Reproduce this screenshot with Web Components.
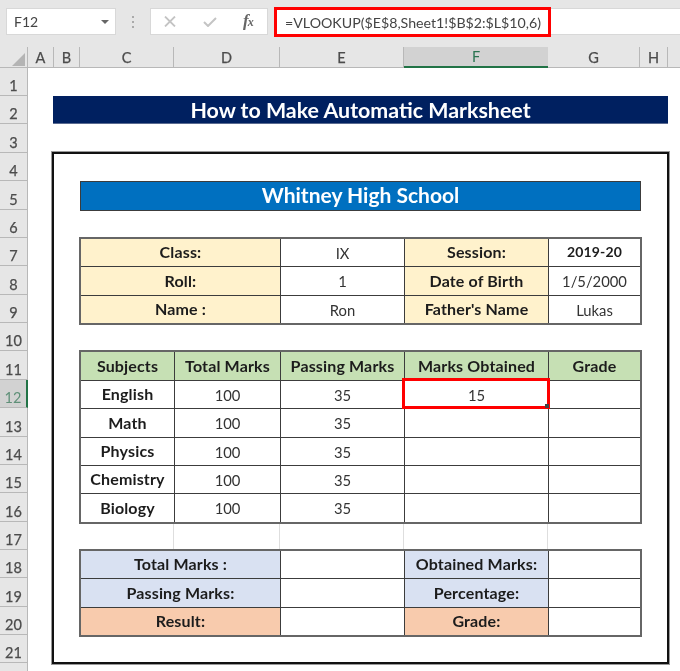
<!DOCTYPE html>
<html><head><meta charset="utf-8"><style>
html,body{margin:0;padding:0;background:#fff;overflow:hidden}
body{font-family:Lato,"Liberation Sans",sans-serif;width:680px;height:671px}
</style></head><body>
<x-excel>
<x-formula-bar name="F12" formula="=VLOOKUP($E$8,Sheet1!$B$2:$L$10,6)"></x-formula-bar>
<x-sheet id="s"></x-sheet>
</x-excel>
<script>
class XExcel extends HTMLElement{constructor(){super();this.attachShadow({mode:'open'}).innerHTML=`<style>:host{display:flex;flex-direction:column;width:680px;height:671px;overflow:hidden;color:#222;filter:blur(.3px)}::slotted(*){flex:none}</style><slot></slot>`}}
class XFormulaBar extends HTMLElement{connectedCallback(){const n=this.getAttribute('name'),f=this.getAttribute('formula');this.attachShadow({mode:'open'}).innerHTML=`<style>
:host{display:flex;height:47px;box-sizing:border-box;background:#e6e6e6;padding:8px 0 12px 6px;align-items:stretch;border-top:0}
.box{background:#fff;border:1px solid #d8d8d8;box-sizing:border-box;display:flex;align-items:center}
.name{width:110px;padding:0 6px 0 7px;justify-content:space-between;font-size:14px;color:#444}
.name i{width:0;height:0;border:4px solid transparent;border-top:4px solid #666;border-bottom:0}
.dots{width:34px;display:flex;flex-direction:column;align-items:center;justify-content:center;gap:3px}
.dots b{width:2px;height:2px;background:#aaa}
.fx{width:118px;padding:0 0 0 13px;gap:26px}
.fx svg:first-child{margin-right:1px}
.fb{flex:1;margin:-1px 0 -2px 6px;display:flex}
.f{background:#fff;width:277px;border:3px solid #f00;font-size:14.2px;color:#444;display:flex;align-items:center;padding-left:8px;box-sizing:border-box;white-space:nowrap}
.rest{flex:1;background:#fff;border-top:1px solid #d8d8d8;border-bottom:1px solid #d8d8d8;margin:1px 0 2px}
.ft{font:italic bold 17px "Liberation Serif",serif;color:#666;margin-top:-2px}
.ft small{font-size:12px;margin-left:-1px}
</style>
<div class="box name"><span>${n}</span><i></i></div>
<div class="dots"><b></b><b></b><b></b></div>
<div class="box fx">
<svg width="12" height="11" viewBox="0 0 12 11"><path d="M1 .5L11 10.5M11 .5L1 10.5" stroke="#c4c4c4" stroke-width="1.8" fill="none"/></svg>
<svg width="14" height="10" viewBox="0 0 14 10"><path d="M1 5L5 9L13 1" stroke="#c4c4c4" stroke-width="2" fill="none"/></svg>
<span class="ft">f<small>x</small></span></div>
<div class="fb"><div class="f">${f}</div><div class="rest"></div></div>`}}
class XSheet extends HTMLElement{constructor(){super();this.attachShadow({mode:'open'}).innerHTML=`<style>:host{display:grid;
grid-template-columns:28px 26px 26px 94px 106px 124px 144px 92px 28px 12px;
grid-template-rows:21px 28px 28px 29px 28px 29px 28px 28px 29px 28px 28px 29px 28px 29px 28px 28px 29px 28px 28px 29px 28px 28px 10px;background:#fff}</style><slot></slot>`}}
class XCell extends HTMLElement{connectedCallback(){const a=k=>this.getAttribute(k);
const [c,r,cs=1,rs=1]=a('at').split(',').map(Number);this.style.gridArea=`${r}/${c}/span ${rs}/span ${cs}`;
const v=a('v');const line='border:1px solid #3c3c3c;margin:0 -1px -1px 0;';const map={
h:'background:#e6e6e6;color:#4c4c4c;font-size:14.5px;border-right:1px solid #b8b8b8;border-bottom:1px solid #b8b8b8;-webkit-text-stroke:.25px #4c4c4c;',
hs:'background:#d2d2d2;color:#2a7350;font-size:14.5px;border-bottom:2px solid #217346;',
hr:'background:#d2d2d2;color:#5f9078;font-size:14.5px;border-right:2px solid #217346;border-bottom:1px solid #b8b8b8;',
t:line+'font-size:14.8px;color:#333;',
b:line+'font-size:16px;letter-spacing:.15px;font-weight:700;color:#1c1c1c;padding-bottom:2px;',
ti:line+'font-weight:700;color:#fff;'};
this.attachShadow({mode:'open'}).innerHTML=`<style>:host{display:flex;align-items:center;justify-content:center;box-sizing:border-box;white-space:nowrap;overflow:hidden;${map[a('k')]||''}${a('x')||''}}</style>${v||''}`}}
customElements.define('x-excel',XExcel);customElements.define('x-formula-bar',XFormulaBar);customElements.define('x-sheet',XSheet);customElements.define('x-cell',XCell);
const s=document.getElementById('s');
const add=(at,k,v,x)=>{const e=document.createElement('x-cell');e.setAttribute('at',at);e.setAttribute('k',k);if(v!==undefined&&v!=='')e.setAttribute('v',v);if(x)e.setAttribute('x',x);s.appendChild(e)};
// corner + headers
add('1,1','h','<svg width="13" height="13" viewBox="0 0 13 13" style="margin:4px 0 0 9px"><path d="M13 0V13H0Z" fill="#b4b4b4"/></svg>');
'ABCDEFGHI'.split('').forEach((l,i)=>add(`${i+2},1`,l=='F'?'hs':'h',l=='I'?'':l,l=='I'?'border-right:none':''));
for(let r=1;r<=22;r++)add(`1,${r+1}`,r==12?'hr':'h',r==22?'':r,'padding-top:8px');
// faint gridlines in row 17
[4,5,6,7].forEach(c=>add(`${c},18`,'', '', 'border-right:1px solid #dedede'));
// title
add('3,3,7','ti','How to Make Automatic Marksheet','background:#002060;font-size:21.4px;border:none;border-bottom:1px solid #5a6a90;margin:0 0 0 -1px');
// big box
add('3,5,7,18','','','border:2px solid #111;outline:1px solid #999;margin:-1px -1px -1px -2px;background:none');
add('4,6,5','ti','Whitney High School','background:#0070c0;font-size:21px;padding-bottom:3px');
const Y='background:#fff2cc',G='background:#c6e0b4',B='background:#d9e1f2',O='background:#f8cbad';
[[8,'Class:','IX','Session:','2019-20',1],[9,'Roll:','1','Date of Birth','1/5/2000'],[10,'Name :','Ron',"Father's Name",'Lukas']].forEach(([r,a,b,c,d,bold])=>{
add(`4,${r},2`,'b',a,Y);add(`6,${r}`,'t',b);add(`7,${r}`,'b',c,Y);add(`8,${r}`,bold?'b':'t',d,bold?'font-size:14px':'')});
['Subjects','Total Marks','Passing Marks','Marks Obtained','Grade'].forEach((h,i)=>add(`${i+4},12`,'b',h,G));
['English','Math','Physics','Chemistry','Biology'].forEach((n,i)=>{const r=13+i;add(`4,${r}`,'b',n);add(`5,${r}`,'t','100');add(`6,${r}`,'t','35');add(`7,${r}`,'t',i==0?'15':'');add(`8,${r}`,'t')});
[[19,'Total Marks :','Obtained Marks:',B],[20,'Passing Marks:','Percentage:',B],[21,'Result:','Grade:',O]].forEach(([r,a,b,col])=>{
add(`4,${r},2`,'b',a,col);add(`6,${r}`,'t');add(`7,${r}`,'b',b,col);add(`8,${r}`,'t')});
// table outer frames
['4,8,5,3','4,12,5,6','4,19,5,3'].forEach(at=>add(at,'','','border:2px solid #666;margin:-1px -2px -2px -1px;background:none'));
add('7,13','','<span style="position:absolute;right:-2px;bottom:-2px;width:4px;height:4px;background:#444"></span>','border:3px solid #f00;margin:-2px -2px -1px -2px;background:none;overflow:visible;position:relative');
</script></body></html>
